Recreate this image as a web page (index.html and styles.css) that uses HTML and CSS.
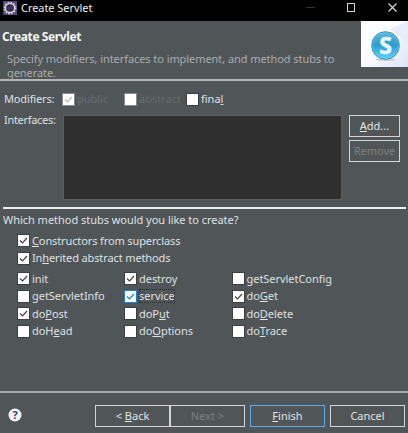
FILE: index.html
```html
<!DOCTYPE html>
<html lang="en">
<head>
<meta charset="utf-8">
<title>Create Servlet</title>
<link rel="stylesheet" href="styles.css">
</head>
<body>
<div class="dialog">
  <div class="titlebar">
    <svg class="app-icon" width="14" height="14" viewBox="0 0 14 14">
      <rect width="14" height="14" fill="#594580"/>
      <circle cx="7" cy="7" r="5.7" fill="none" stroke="#d4cfd4" stroke-width="1.4" stroke-dasharray="1.5 1.48"/>
      <circle cx="7" cy="7" r="4.6" fill="#30294d" stroke="#d5cfd2" stroke-width="1.5"/>
      <path d="M3.600 6.200h6.800M3.600 7.800h6.800" stroke="#4c4270" stroke-width=".8"/>
    </svg>
    <span class="window-title">Create Servlet</span>
    <svg class="window-controls" width="104" height="21" viewBox="0 0 104 21">
      <path d="M2 7.500h9" stroke="#343434"/>
      <rect x="43.500" y="3.500" width="7" height="8" fill="none" stroke="#d2d2d2"/>
      <path d="M84.500 3.500l8 8M92.500 3.500l-8 8" stroke="#e0e0e0" stroke-width="1.1"/>
    </svg>
  </div>

  <header class="header">
    <div class="header-text">
      <h1>Create Servlet</h1>
      <p>Specify modifiers, interfaces to implement, and method stubs to<br>generate.</p>
    </div>
    <svg class="banner" width="47" height="46" viewBox="0 0 47 46">
      <defs>
        <linearGradient id="paper" x1="0" y1="0" x2="1" y2="1">
          <stop offset="0" stop-color="#fff"/><stop offset=".5" stop-color="#fafbff"/><stop offset="1" stop-color="#dce3f6"/>
        </linearGradient>
        <linearGradient id="ball" x1="0" y1="0" x2="0" y2="1">
          <stop offset="0" stop-color="#5fbade"/><stop offset=".48" stop-color="#2b9ccd"/><stop offset="1" stop-color="#58d4fb"/>
        </linearGradient>
      </defs>
      <rect width="47" height="46" fill="url(#paper)"/>
      <path d="M29 8L47 0v22z" fill="#e9edf9"/>
      <ellipse cx="24.500" cy="38.500" rx="10" ry="1.500" fill="#cfc8d0"/>
      <circle cx="24.500" cy="24.500" r="13.800" fill="url(#ball)" stroke="#2c8fbd" stroke-width="1"/>
      <circle cx="24.500" cy="24.500" r="12.800" fill="none" stroke="#8bd3ec" stroke-width=".5"/>
      <text x="24.500" y="32.500" text-anchor="middle" class="banner-letter">S</text>
    </svg>
  </header>

  <section class="modifiers">
    <span class="label">Modifiers:</span>
    <span class="check disabled"><svg class="box" viewBox="0 0 11 11"><path d="M2 5.500l2.500 2.500 4.500-5"/></svg><span>public</span></span>
    <span class="check disabled"><svg class="box" viewBox="0 0 11 11"></svg><span>abstract</span></span>
    <span class="check"><svg class="box" viewBox="0 0 11 11"></svg><span>fina<u>l</u></span></span>
  </section>

  <section class="interfaces">
    <span class="label">Interfaces:</span>
    <div class="list"></div>
    <div class="list-actions">
      <button class="btn"><span><u>A</u>dd...</span></button>
      <button class="btn" disabled><span>Remove</span></button>
    </div>
  </section>

  <section class="stubs">
    <p class="question">Which method stubs would you like to create?</p>
    <div class="options">
      <span class="check"><svg class="box" viewBox="0 0 11 11"><path d="M2 5.500l2.500 2.500 4.500-5"/></svg><span><u>C</u>onstructors from superclass</span></span>
      <span class="check"><svg class="box" viewBox="0 0 11 11"><path d="M2 5.500l2.500 2.500 4.500-5"/></svg><span>In<u>h</u>erited abstract methods</span></span>
    </div>
    <div class="methods">
      <span class="check"><svg class="box" viewBox="0 0 11 11"><path d="M2 5.500l2.500 2.500 4.500-5"/></svg><span>init</span></span>
      <span class="check"><svg class="box" viewBox="0 0 11 11"><path d="M2 5.500l2.500 2.500 4.500-5"/></svg><span>destroy</span></span>
      <span class="check"><svg class="box" viewBox="0 0 11 11"></svg><span>getServletConfig</span></span>
      <span class="check"><svg class="box" viewBox="0 0 11 11"></svg><span>getServletInfo</span></span>
      <span class="check focused"><svg class="box" viewBox="0 0 11 11"><path d="M2 5.500l2.500 2.500 4.500-5"/></svg><span>service</span></span>
      <span class="check"><svg class="box" viewBox="0 0 11 11"><path d="M2 5.500l2.500 2.500 4.500-5"/></svg><span>do<u>G</u>et</span></span>
      <span class="check"><svg class="box" viewBox="0 0 11 11"><path d="M2 5.500l2.500 2.500 4.500-5"/></svg><span>do<u>P</u>ost</span></span>
      <span class="check"><svg class="box" viewBox="0 0 11 11"></svg><span>doP<u>u</u>t</span></span>
      <span class="check"><svg class="box" viewBox="0 0 11 11"></svg><span>do<u>D</u>elete</span></span>
      <span class="check"><svg class="box" viewBox="0 0 11 11"></svg><span>doH<u>e</u>ad</span></span>
      <span class="check"><svg class="box" viewBox="0 0 11 11"></svg><span>do<u>O</u>ptions</span></span>
      <span class="check"><svg class="box" viewBox="0 0 11 11"></svg><span>do<u>T</u>race</span></span>
    </div>
  </section>

  <footer class="footer">
    <svg class="help" width="14" height="14" viewBox="0 0 14 14">
      <circle cx="7" cy="7" r="6.500" fill="#f2f4f7"/>
      <text x="7" y="11" text-anchor="middle" class="help-mark">?</text>
    </svg>
    <div class="nav">
      <button class="btn"><span>&lt; <u>B</u>ack</span></button>
      <button class="btn" disabled><span>Next &gt;</span></button>
    </div>
    <button class="btn primary"><span><u>F</u>inish</span></button>
    <button class="btn"><span>Cancel</span></button>
  </footer>
</div>
</body>
</html>
```
FILE: styles.css
```css
* { box-sizing: border-box; }
body {
  margin: 0;
  background: #505558;
  color: #dfe1e2;
  font: 11px/14px "Noto Sans", "Open Sans", sans-serif;
}
p, h1 { margin: 0; }
u { text-decoration-thickness: 1px; text-underline-offset: 1px; text-decoration-skip-ink: none; }
.dialog { width: 408px; height: 433px; display: flex; flex-direction: column; overflow: hidden; }

.titlebar { height: 21px; background: #000; display: flex; align-items: flex-start; flex: none; }
.app-icon { margin: 1px 4px 0 3px; }
.window-title { font-size: 11px; line-height: 16px; color: #eee; letter-spacing: -.05px; }
.window-controls { margin-left: auto; }

.header { height: 60px; flex: none; display: flex; justify-content: space-between; border-bottom: 2px solid #b4b5b7; }
.header-text { padding: 8px 0 0 2px; white-space: nowrap; }
h1 { font-size: 12px; line-height: 15px; font-weight: 700; color: #f5f5f5; letter-spacing: -.4px; }
.header p { margin: 8px 0 0 5px; color: #a9acae; line-height: 14px; letter-spacing: -.065px; }
.banner { flex: none; }
.banner-letter { font: 700 23px "Open Sans", sans-serif; fill: #e8f6fb; stroke: #e8f6fb; stroke-width: .6; }

.label { letter-spacing: -.15px; }
.modifiers { display: grid; grid-template-columns: 59px 62px 62px 1fr; padding-left: 4px; margin-top: 11px; height: 14px; align-items: center; flex: none; }
.check { display: flex; align-items: center; gap: 3px; white-space: nowrap; height: 14px; }
.box { width: 11px; height: 11px; flex: none; background: #fff; outline: 1px solid #3b3f42; outline-offset: -.5px; }
.box path { fill: none; stroke: #444; stroke-width: 1.2; }
.disabled { color: #686d70; }
.disabled .box { outline-color: #888b8d; }
.disabled .box path { stroke: #bbb; }
.focused .box { outline-color: #1680dc; }
.focused .box path { stroke: #1680dc; }
.focused span { outline: 1px dotted #292c2e; outline-offset: -1px; }

.interfaces { display: grid; grid-template-columns: 59px 279px 51px; padding-left: 4px; margin-top: 9px; height: 85px; flex: none; }
.interfaces .label { margin-top: -2px; letter-spacing: -.3px; }
.list { background: #2f2f2f; border: 1px solid #5c5f60; }
.list-actions { display: flex; flex-direction: column; gap: 3px; margin-left: 7px; width: 51px; }

.btn { height: 22px; padding: 0; border: 1px solid #d6d4d7; border-radius: 0; background: #505558; color: #e2e4e5; font: inherit; white-space: nowrap; }
.btn:disabled { color: #7c8082; }
.btn.primary { border-color: #63a8e2; }

.stubs { margin: 7px 2px 0 3px; border-top: 2px solid #eef0f0; padding: 4px 0 0; flex: 1; }
.question { line-height: 14px; letter-spacing: -.03px; }
.options { display: grid; grid-auto-rows: 17.5px; padding-left: 15px; margin-top: 5px; align-items: center; letter-spacing: -.12px; }
.methods { display: grid; grid-template-columns: 107px 107.5px 1fr; grid-auto-rows: 17.5px; padding-left: 15px; margin-top: 3px; align-items: center; letter-spacing: -.04px; }

.footer { flex: none; height: 42px; border-top: 2px solid #a9abad; display: flex; align-items: flex-start; padding: 12px 3px 0 8px; }
.footer .btn { width: 75px; margin-left: 5px; }
.help { margin-top: 3px; }
.help-mark { font: 700 11px "Open Sans", sans-serif; fill: #33436d; }
.nav { display: flex; margin-left: auto; }
.nav .btn { margin-left: 0; }
```
